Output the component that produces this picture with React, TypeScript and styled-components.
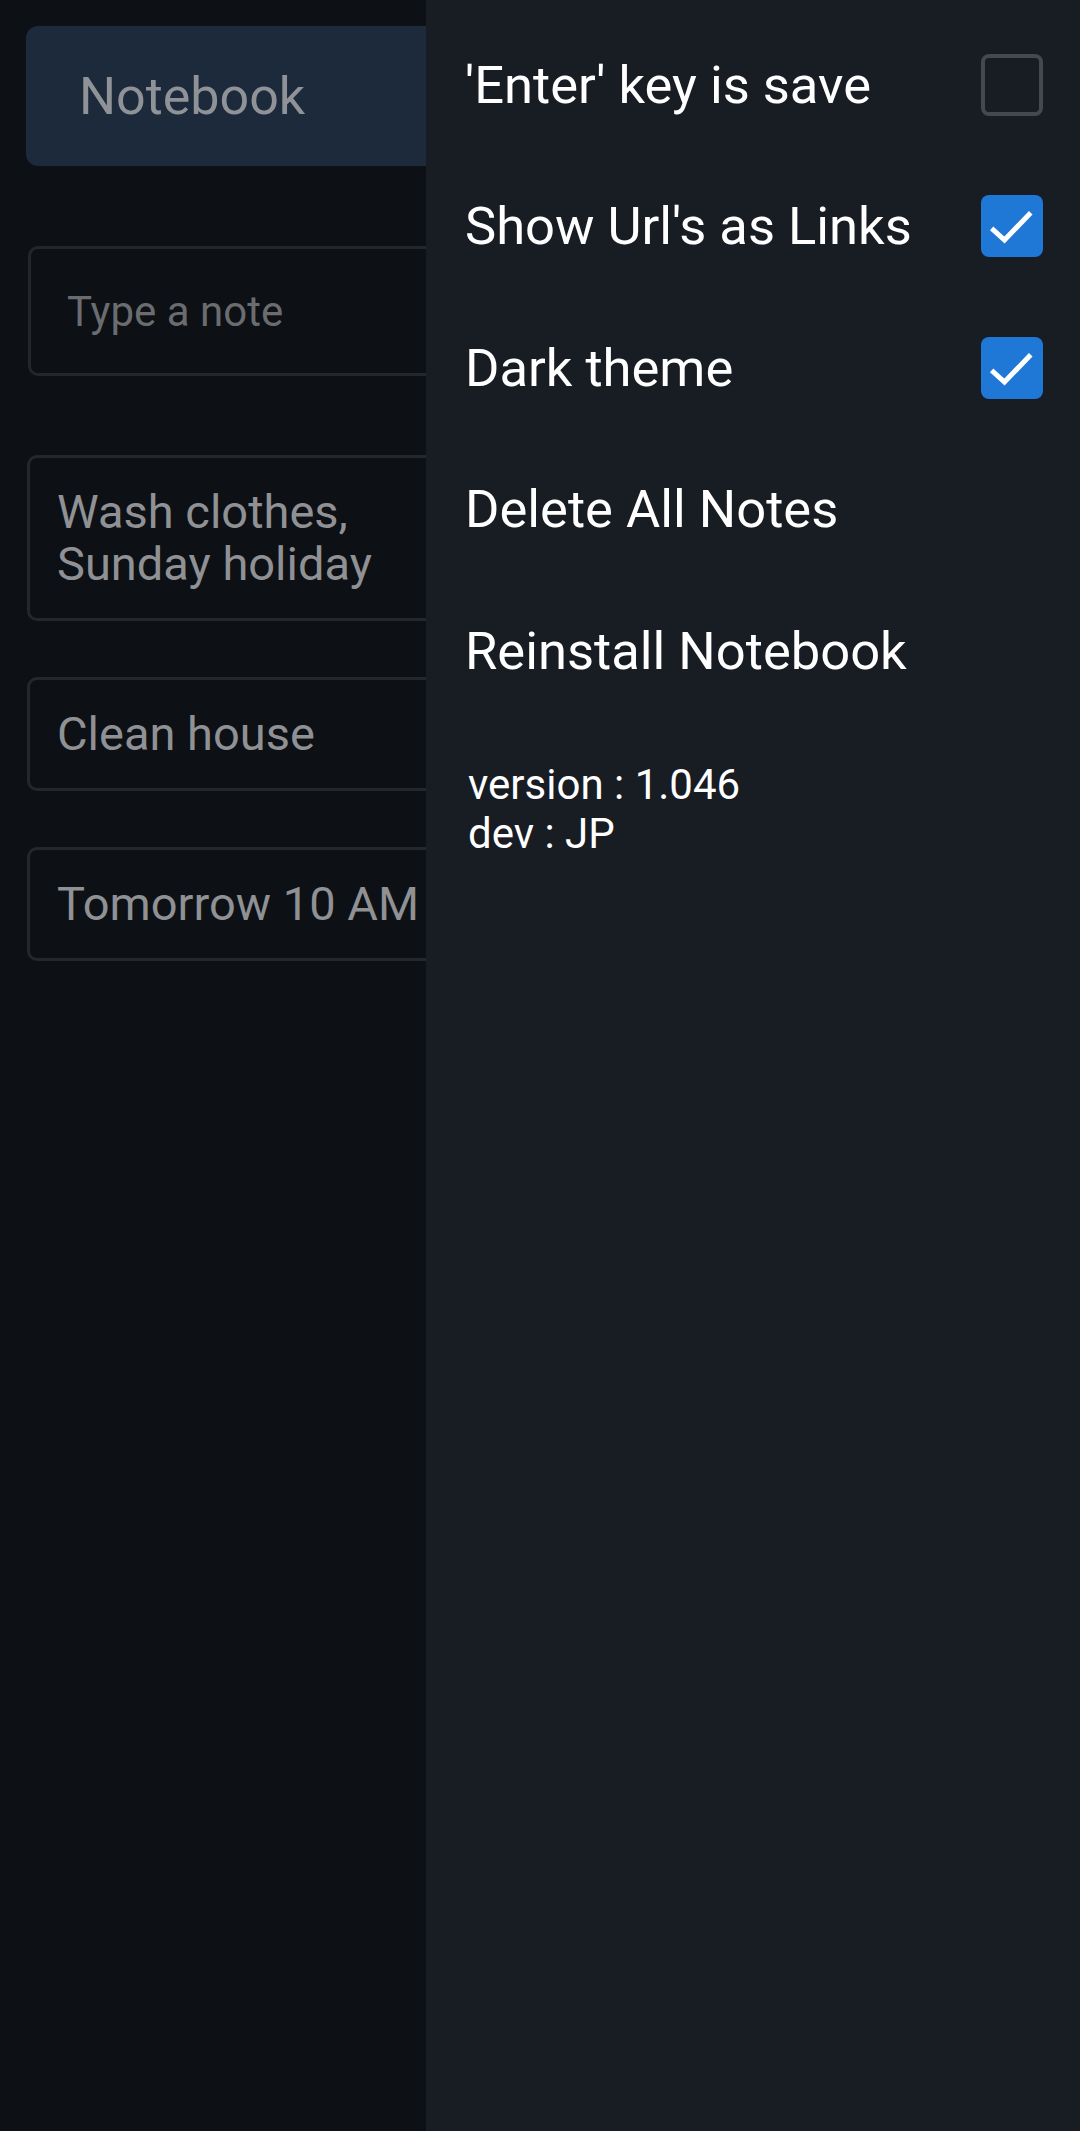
import React from "react";
import styled, { createGlobalStyle } from "styled-components";

const GlobalStyle = createGlobalStyle`
  html, body, #root { margin: 0; padding: 0; height: 100%; }
  body {
    background: #0d1014;
    font-family: Roboto, "Noto Sans", "Liberation Sans", sans-serif;
    -webkit-font-smoothing: antialiased;
  }
  * { box-sizing: border-box; }
`;

const Screen = styled.div`
  position: relative;
  height: 2131px;
  overflow: hidden;
  background: #0d1014;
`;

const Main = styled.main`
  display: flex;
  flex-direction: column;
  padding: 26px 26px 0 26px;
`;

const Header = styled.header`
  height: 140px;
  border-radius: 12px;
  background: #1c2a3b;
  display: flex;
  align-items: center;
  padding-left: 53px;
  font-size: 52px;
  color: #8f9296;
`;

const NoteInput = styled.div`
  margin: 80px 2px 0 2px;
  height: 130px;
  border: 3px solid #23262a;
  border-radius: 10px;
  display: flex;
  align-items: center;
  padding-left: 36px;
  font-size: 42px;
  color: #6a6c70;
`;

const NoteList = styled.div`
  margin: 79px 1px 0 1px;
  display: flex;
  flex-direction: column;
  gap: 56px;
`;

const Note = styled.div`
  border: 3px solid #24272b;
  border-radius: 10px;
  padding: 28px 27px;
  font-size: 47px;
  line-height: 52px;
  color: #8f9195;
  white-space: pre-line;
`;

const Drawer = styled.aside`
  position: absolute;
  top: 0;
  right: 0;
  bottom: 0;
  width: 654px;
  background: #181c23;
  padding: 14px 37px 0 39px;
  display: flex;
  flex-direction: column;
`;

const Row = styled.div`
  height: 141.5px;
  display: flex;
  align-items: center;
  justify-content: space-between;
  font-size: 52.5px;
  color: #ffffff;
`;

const Box = styled.span<{ $checked: boolean }>`
  width: 62px;
  height: 62px;
  border-radius: 8px;
  display: flex;
  align-items: center;
  justify-content: center;
  flex-shrink: 0;
  background: ${(p) => (p.$checked ? "#1f78d6" : "transparent")};
  border: ${(p) => (p.$checked ? "none" : "4px solid #45484d")};
`;

const Info = styled.div`
  margin-top: 38px;
  padding-left: 3px;
  font-size: 42px;
  line-height: 49px;
  color: #ffffff;
`;

const Check: React.FC<{ checked: boolean }> = ({ checked }) => (
  <Box $checked={checked}>
    {checked && (
      <svg width="62" height="62" viewBox="0 0 62 62">
        <polyline
          points="12.5,35 23.5,45 48,19.5"
          fill="none"
          stroke="#ffffff"
          strokeWidth="5"
          strokeLinecap="square"
        />
      </svg>
    )}
  </Box>
);

const notes = ["Wash clothes,\nSunday holiday", "Clean house", "Tomorrow 10 AM"];

const settings: { label: string; checked?: boolean }[] = [
  { label: "'Enter' key is save", checked: false },
  { label: "Show Url's as Links", checked: true },
  { label: "Dark theme", checked: true },
  { label: "Delete All Notes" },
  { label: "Reinstall Notebook" },
];

export default function App() {
  return (
    <>
      <GlobalStyle />
      <Screen>
        <Main>
          <Header>Notebook</Header>
          <NoteInput>Type a note</NoteInput>
          <NoteList>
            {notes.map((n) => (
              <Note key={n}>{n}</Note>
            ))}
          </NoteList>
        </Main>
        <Drawer>
          {settings.map((s) => (
            <Row key={s.label}>
              <span>{s.label}</span>
              {s.checked !== undefined && <Check checked={s.checked} />}
            </Row>
          ))}
          <Info>
            version : 1.046
            <br />
            dev : JP
          </Info>
        </Drawer>
      </Screen>
    </>
  );
}
